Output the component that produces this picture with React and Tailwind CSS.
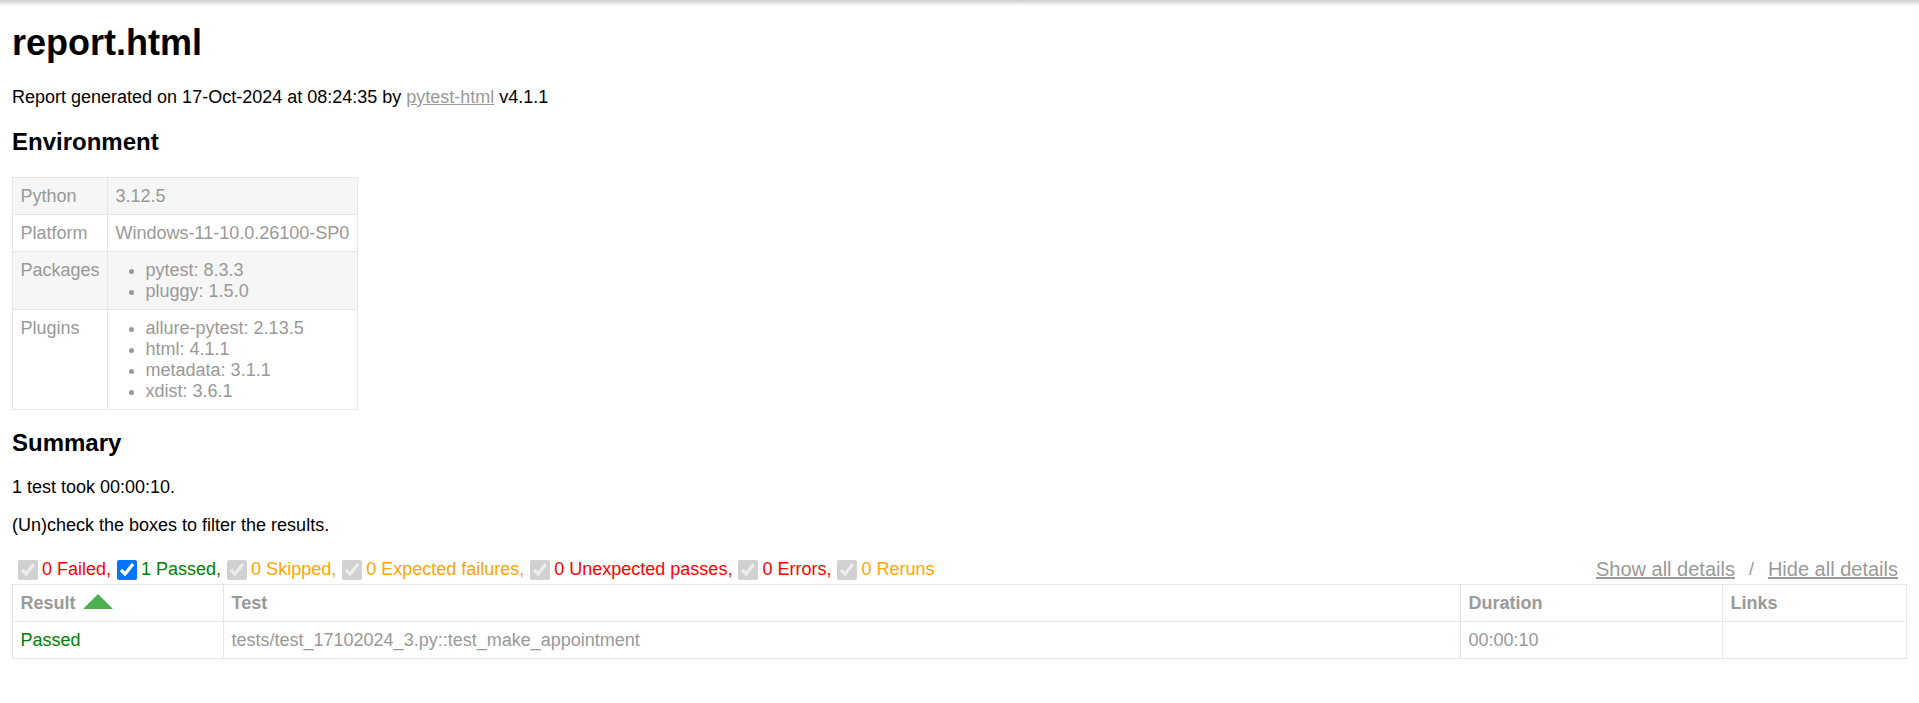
import React from "react";

const envRows = [
  { name: "Python", value: "3.12.5" },
  { name: "Platform", value: "Windows-11-10.0.26100-SP0" },
  { name: "Packages", value: ["pytest: 8.3.3", "pluggy: 1.5.0"] },
  {
    name: "Plugins",
    value: ["allure-pytest: 2.13.5", "html: 4.1.1", "metadata: 3.1.1", "xdist: 3.6.1"],
  },
];

const filters = [
  { label: "0 Failed,", color: "text-[#ff0000]", enabled: false },
  { label: "1 Passed,", color: "text-[#008000]", enabled: true },
  { label: "0 Skipped,", color: "text-[#ffa500]", enabled: false },
  { label: "0 Expected failures,", color: "text-[#ffa500]", enabled: false },
  { label: "0 Unexpected passes,", color: "text-[#ff0000]", enabled: false },
  { label: "0 Errors,", color: "text-[#ff0000]", enabled: false },
  { label: "0 Reruns", color: "text-[#ffa500]", enabled: false },
];

const App = () => {
  return (
    <div className="min-h-screen bg-white px-[12px] font-['Liberation_Sans',Arial,Helvetica,sans-serif] text-[18px] leading-[21px] text-[#999]">
      {/* browser top shadow */}
      <div className="pointer-events-none fixed inset-x-0 top-0 h-[6px] bg-linear-to-b from-[#cdcdcd] to-transparent" />

      <h1 className="mt-[22px] text-[36px] leading-[41px] font-bold text-black">report.html</h1>
      <p className="mt-[24px] text-black">
        Report generated on 17-Oct-2024 at 08:24:35 by{" "}
        <a href="#" className="text-[#999] underline">
          pytest-html
        </a>{" "}
        v4.1.1
      </p>

      {/* Environment */}
      <h2 className="mt-[20px] text-[24px] leading-[28px] font-bold text-black">Environment</h2>
      <table className="mt-[21px] border-collapse">
        <tbody>
          {envRows.map((row, i) => (
            <tr key={row.name} className={i % 2 === 0 ? "bg-[#f6f6f6]" : ""}>
              <td className="border border-[#e6e6e6] p-[7.5px] align-top">{row.name}</td>
              <td className="border border-[#e6e6e6] p-[7.5px] align-top">
                {Array.isArray(row.value) ? (
                  <ul className="list-disc px-[30px]">
                    {row.value.map((v) => (
                      <li key={v}>{v}</li>
                    ))}
                  </ul>
                ) : (
                  row.value
                )}
              </td>
            </tr>
          ))}
        </tbody>
      </table>

      {/* Summary */}
      <h2 className="mt-[19px] text-[24px] leading-[28px] font-bold text-black">Summary</h2>
      <p className="mt-[20px] text-black">1 test took 00:00:10.</p>
      <p className="mt-[17px] text-black">(Un)check the boxes to filter the results.</p>

      <div className="mt-[19.5px] flex items-center justify-between">
        <div className="flex items-center">
          {filters.map((f) => (
            <React.Fragment key={f.label}>
              <input
                type="checkbox"
                defaultChecked
                disabled={!f.enabled}
                className="mt-[4.5px] mr-[4.5px] mb-[4.5px] ml-[6px] h-[19.5px] w-[19.5px]"
              />
              <span className={f.color}>{f.label}</span>
            </React.Fragment>
          ))}
        </div>
        <div className="flex items-center">
          <button className="px-[9px] py-[1.5px] text-[20px] leading-[23px] text-[#999] underline">
            Show all details
          </button>
          <span>{"\u00a0/\u00a0"}</span>
          <button className="px-[9px] py-[1.5px] text-[20px] leading-[23px] text-[#999] underline">
            Hide all details
          </button>
        </div>
      </div>

      {/* Results */}
      <table className="w-full table-fixed border-collapse border border-[#e6e6e6]">
        <thead>
          <tr>
            <th className="w-[211px] border border-[#e6e6e6] p-[7.5px] text-left font-bold">
              Result
              <span className="ml-[7.5px] inline-block h-0 w-0 border-r-[15px] border-b-[15px] border-l-[15px] border-r-transparent border-b-[#4caf50] border-l-transparent" />
            </th>
            <th className="border border-[#e6e6e6] p-[7.5px] text-left font-bold">Test</th>
            <th className="w-[262px] border border-[#e6e6e6] p-[7.5px] text-left font-bold">Duration</th>
            <th className="w-[184px] border border-[#e6e6e6] p-[7.5px] text-left font-bold">Links</th>
          </tr>
        </thead>
        <tbody>
          <tr>
            <td className="border border-[#e6e6e6] p-[7.5px] text-[#008000]">Passed</td>
            <td className="border border-[#e6e6e6] p-[7.5px]">tests/test_17102024_3.py::test_make_appointment</td>
            <td className="border border-[#e6e6e6] p-[7.5px]">00:00:10</td>
            <td className="border border-[#e6e6e6] p-[7.5px]"></td>
          </tr>
        </tbody>
      </table>
    </div>
  );
};

export default App;
